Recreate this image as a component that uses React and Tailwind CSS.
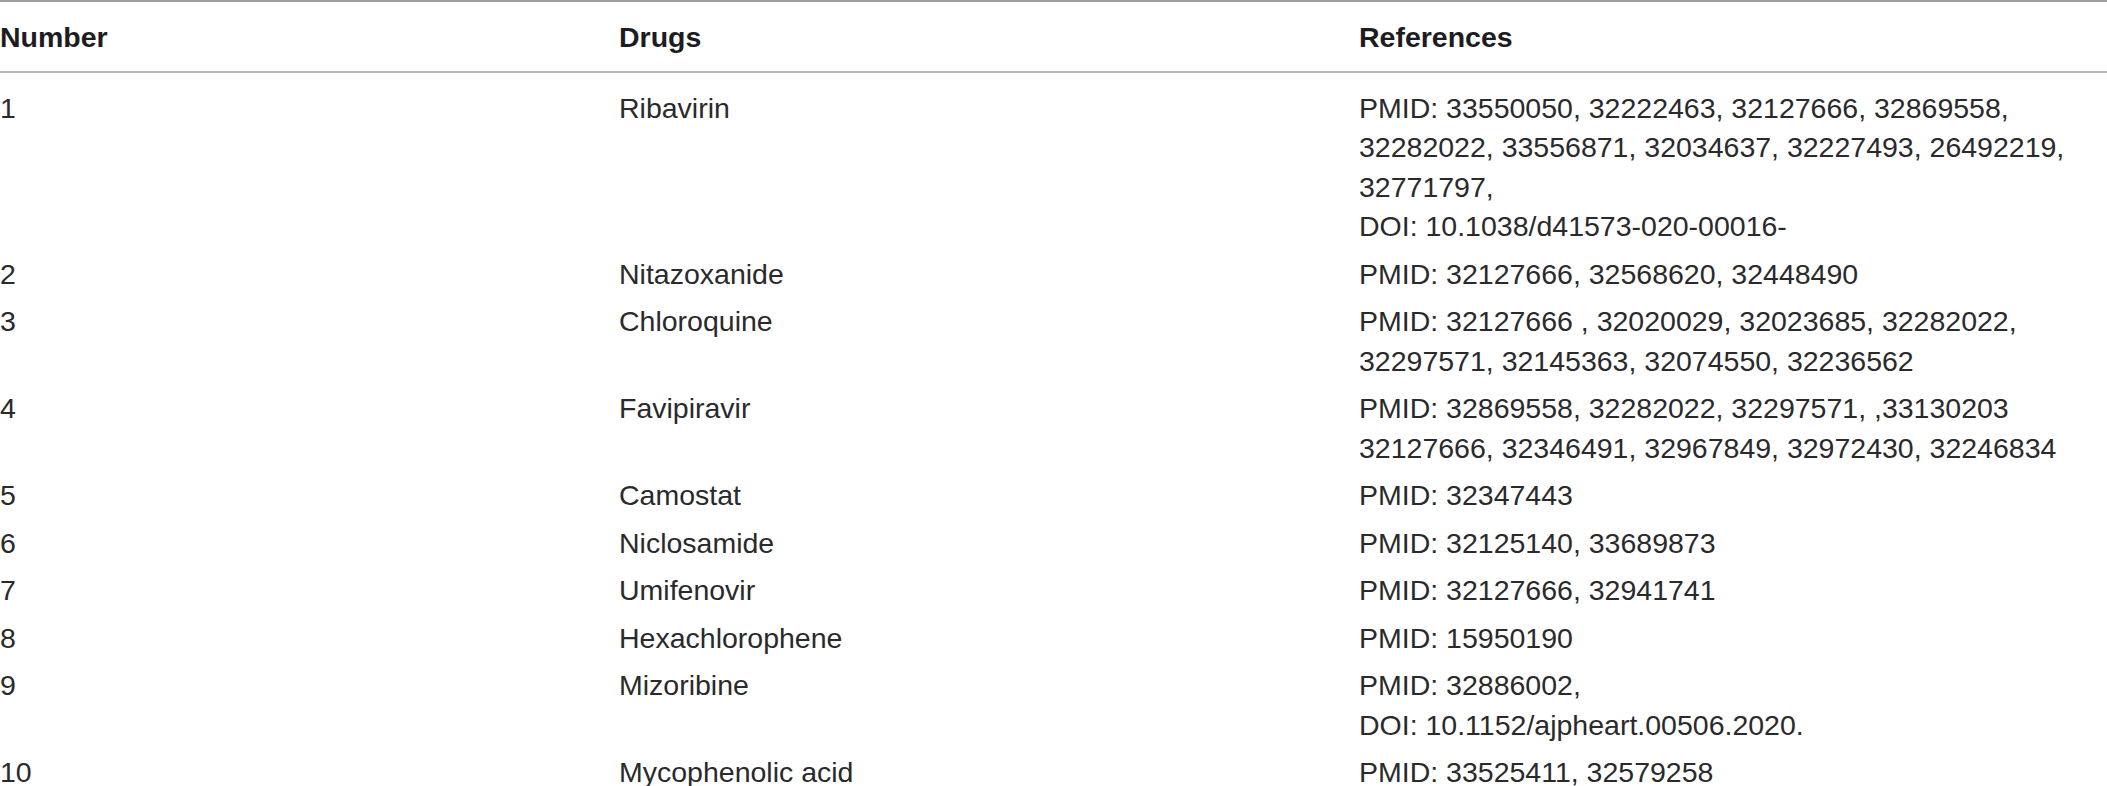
const rows = [
  {
    num: "1",
    drug: "Ribavirin",
    refs: [
      "PMID: 33550050, 32222463, 32127666, 32869558,",
      "32282022, 33556871, 32034637, 32227493, 26492219,",
      "32771797,",
      "DOI: 10.1038/d41573-020-00016-",
    ],
  },
  { num: "2", drug: "Nitazoxanide", refs: ["PMID: 32127666, 32568620, 32448490"] },
  {
    num: "3",
    drug: "Chloroquine",
    refs: [
      "PMID: 32127666 , 32020029, 32023685, 32282022,",
      "32297571, 32145363, 32074550, 32236562",
    ],
  },
  {
    num: "4",
    drug: "Favipiravir",
    refs: [
      "PMID: 32869558, 32282022, 32297571, ,33130203",
      "32127666, 32346491, 32967849, 32972430, 32246834",
    ],
  },
  { num: "5", drug: "Camostat", refs: ["PMID: 32347443"] },
  { num: "6", drug: "Niclosamide", refs: ["PMID: 32125140, 33689873"] },
  { num: "7", drug: "Umifenovir", refs: ["PMID: 32127666, 32941741"] },
  { num: "8", drug: "Hexachlorophene", refs: ["PMID: 15950190"] },
  {
    num: "9",
    drug: "Mizoribine",
    refs: ["PMID: 32886002,", "DOI: 10.1152/ajpheart.00506.2020."],
  },
  { num: "10", drug: "Mycophenolic acid", refs: ["PMID: 33525411, 32579258"] },
];

const App = () => {
  return (
    <div className="w-full min-h-screen bg-white font-['Liberation_Sans',Arial,sans-serif] text-[28.5px] leading-[39.5px]">
      <div className="grid grid-cols-[619px_740px_1fr] border-t-2 border-b-2 border-t-[#9d9d9d] border-b-[#b8b8b8] pt-[16px] pb-[13px] font-bold text-[#1d1d1f]">
        <div>Number</div>
        <div>Drugs</div>
        <div>References</div>
      </div>

      <div className="pt-[12px] text-[#2a2a2c]">
        {rows.map((row) => (
          <div key={row.num} className="grid grid-cols-[619px_740px_1fr] py-[4px]">
            <div>{row.num}</div>
            <div>{row.drug}</div>
            <div>
              {row.refs.map((line, i) => (
                <div key={i} className="whitespace-nowrap">
                  {line}
                </div>
              ))}
            </div>
          </div>
        ))}
      </div>
    </div>
  );
};

export default App;
